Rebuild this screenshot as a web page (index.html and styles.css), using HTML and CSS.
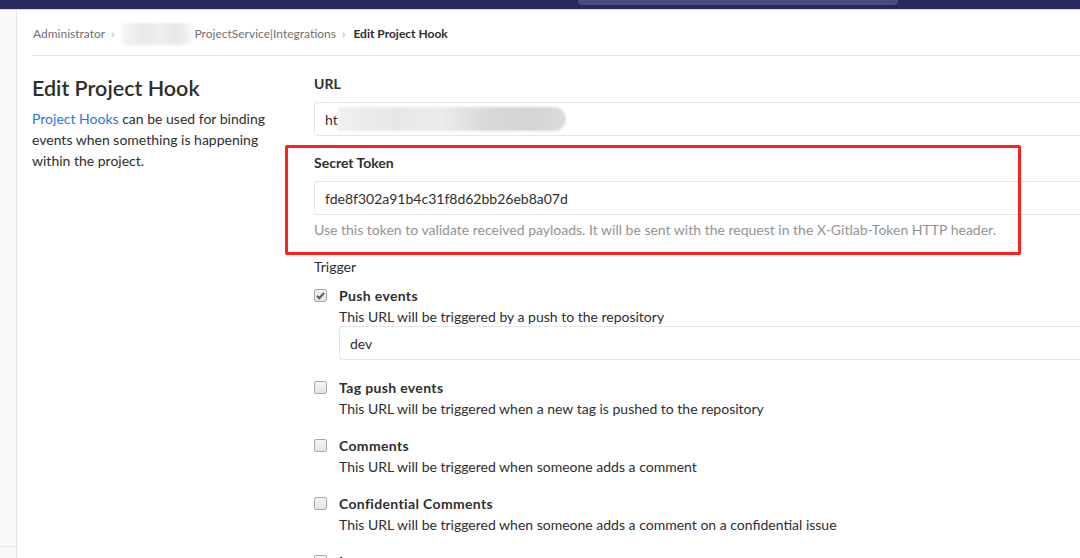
FILE: index.html
```html
<!DOCTYPE html>
<html>
<head>
<meta charset="utf-8">
<link rel="stylesheet" href="styles.css">
</head>
<body>
<header class="topbar">
  <div class="search"></div>
</header>
<div class="layout">
  <aside class="sidebar">
    <div class="sidebar-fill"></div>
    <div class="sidebar-toggle"></div>
  </aside>
  <main class="content">
    <nav class="breadcrumbs">
      <span class="crumb">Administrator</span>
      <span class="chev">›</span>
      <span class="blur-crumb"></span>
      <span class="crumb">ProjectService|Integrations</span>
      <span class="chev">›</span>
      <span class="crumb current">Edit Project Hook</span>
    </nav>
    <div class="row">
      <section class="intro">
        <h4 class="title">Edit Project Hook</h4>
        <p class="desc"><a class="link">Project Hooks</a> can be used for binding events when something is happening within the project.</p>
      </section>
      <form class="form">
        <div class="group">
          <label class="label">URL</label>
          <div class="input"><span>ht</span><span class="blur-url"></span></div>
        </div>
        <div class="group token">
          <label class="label">Secret Token</label>
          <div class="input"><span>fde8f302a91b4c31f8d62bb26eb8a07d</span></div>
          <p class="help">Use this token to validate received payloads. It will be sent with the request in the X-Gitlab-Token HTTP header.</p>
          <div class="annotation"></div>
        </div>
        <div class="trigger-label">Trigger</div>
        <ul class="triggers">
          <li class="trigger">
            <span class="check checked"><svg viewBox="0 0 13 13" width="13" height="13"><path d="M3 6.8 L5.4 9.2 L10 3.8" fill="none" stroke="#5a5a5a" stroke-width="2"/></svg></span>
            <div class="trigger-body">
              <strong class="trigger-name">Push events</strong>
              <p class="trigger-desc">This URL will be triggered by a push to the repository</p>
              <div class="input branch"><span>dev</span></div>
            </div>
          </li>
          <li class="trigger">
            <span class="check"></span>
            <div class="trigger-body">
              <strong class="trigger-name">Tag push events</strong>
              <p class="trigger-desc">This URL will be triggered when a new tag is pushed to the repository</p>
            </div>
          </li>
          <li class="trigger">
            <span class="check"></span>
            <div class="trigger-body">
              <strong class="trigger-name">Comments</strong>
              <p class="trigger-desc">This URL will be triggered when someone adds a comment</p>
            </div>
          </li>
          <li class="trigger">
            <span class="check"></span>
            <div class="trigger-body">
              <strong class="trigger-name">Confidential Comments</strong>
              <p class="trigger-desc">This URL will be triggered when someone adds a comment on a confidential issue</p>
            </div>
          </li>
          <li class="trigger">
            <span class="check"></span>
            <div class="trigger-body">
              <strong class="trigger-name">Issues events</strong>
              <p class="trigger-desc">This URL will be triggered when an issue is created/updated/merged</p>
            </div>
          </li>
        </ul>
      </form>
    </div>
  </main>
</div>
</body>
</html>
```
FILE: styles.css
```css
html, body {
  margin: 0;
  padding: 0;
  overflow: hidden;
  height: 558px;
}
body {
  font-family: "Lato", "Liberation Sans", sans-serif;
  font-size: 14px;
  color: #2e2e2e;
  background: #fff;
}
.topbar {
  height: 9px;
  background: #292961;
  border-bottom: 1px solid #d9d9f2;
  display: flex;
}
.search {
  margin-left: 578px;
  width: 320px;
  height: 5px;
  background: #4a4a7e;
  border-radius: 0 0 4px 4px;
}
.layout {
  display: flex;
  height: 548px;
}
.sidebar {
  width: 16px;
  background: #fafafa;
  border-right: 1px solid #e5e5e5;
  display: flex;
  flex-direction: column;
}
.sidebar-fill { flex: 1; }
.sidebar-toggle {
  height: 11px;
  border-top: 1px solid #e5e5e5;
}
.content {
  flex: 1;
  padding-left: 15px;
  min-width: 0;
}
.breadcrumbs {
  height: 46px;
  border-bottom: 1px solid #e5e5e5;
  display: flex;
  align-items: center;
  font-size: 12px;
  color: #707070;
  padding-left: 1px;
  padding-top: 2px;
  box-sizing: border-box;
}
.chev {
  margin: 0 8px 0 6px;
  color: #a8a8a8;
  font-size: 12px;
}
.blur-crumb {
  width: 70px;
  height: 22px;
  margin: 0 3px 0 -1px;
  background: linear-gradient(90deg, #f4f4f4 0%, #e9e9ea 30%, #efefef 55%, #e6e6e8 75%, #f6f6f6 100%);
  filter: blur(1.5px);
  border-radius: 4px;
}
.crumb.current {
  color: #2e2e2e;
  font-weight: 700;
}
.row {
  display: grid;
  grid-template-columns: 252px 1fr;
  column-gap: 30px;
}
.title {
  margin: 18px 0 0 0;
  font-size: 21.5px;
  font-weight: 600;
  line-height: 28px;
}
.desc {
  margin: 6px 0 0 0;
  line-height: 21px;
  width: 245px;
}
.link { color: #1f78d1; }
.form {
  padding-top: 18px;
  position: relative;
}
.group { margin-bottom: 17px; position: relative; }
.label {
  display: block;
  font-weight: 700;
  line-height: 20px;
  margin-bottom: 8px;
}
.input {
  height: 34px;
  box-sizing: border-box;
  border: 1px solid #e5e5e5;
  border-right: none;
  border-radius: 4px 0 0 4px;
  display: flex;
  align-items: center;
  padding: 0 10px;
  font-size: 14px;
}
.blur-url {
  width: 228px;
  height: 24px;
  border-radius: 0 12px 12px 0;
  background: linear-gradient(90deg, #f0f0f0 0%, #e6e7e9 25%, #ececec 45%, #d8d9da 65%, #d4d4d4 85%, #dcdcdc 100%);
  filter: blur(1px);
}
.help {
  margin: 6px 0 0 0;
  font-size: 14px;
  line-height: 18px;
  color: #939393;
}
.annotation {
  position: absolute;
  left: -29px;
  top: -8px;
  width: 736px;
  height: 110px;
  box-sizing: border-box;
  border: 3px solid #ff1f1f;
  border-radius: 2px;
}
.token { margin-bottom: 18px; }
.trigger-label {
  line-height: 20px;
  margin-bottom: 8px;
}
.triggers {
  list-style: none;
  margin: 0;
  padding: 0;
}
.trigger {
  display: flex;
  gap: 12px;
  margin-bottom: 16px;
}
.check {
  width: 13px;
  height: 13px;
  box-sizing: border-box;
  border: 1px solid #a9a9a9;
  border-radius: 2px;
  background: linear-gradient(#f5f5f5, #e4e4e4);
  margin-top: 4px;
  flex: none;
  display: flex;
}
.check svg { margin: -1px; }
.trigger-body { flex: 1; }
.trigger-name {
  display: block;
  line-height: 21px;
  font-weight: 700;
  letter-spacing: 0.35px;
}
.trigger-desc {
  margin: 0;
  line-height: 21px;
}
.branch { margin-top: -1px; margin-bottom: 1px; }
```
